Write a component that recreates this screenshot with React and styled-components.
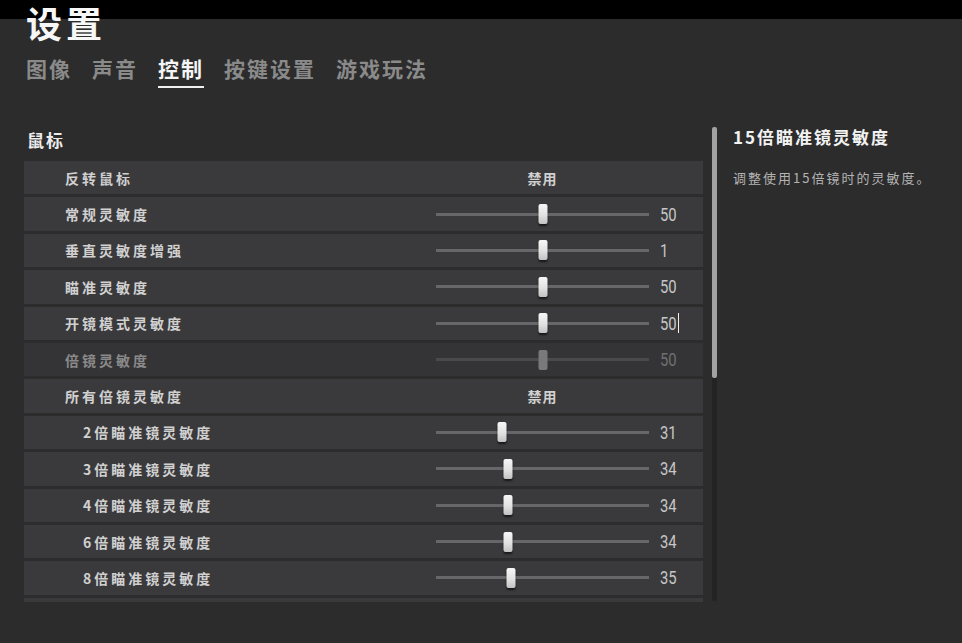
import React from 'react';
import styled, { createGlobalStyle } from 'styled-components';

const GlobalStyle = createGlobalStyle`
  html, body {
    margin: 0;
    padding: 0;
    background: #2c2c2c;
  }
  body {
    width: 962px;
    height: 643px;
    overflow: hidden;
    font-family: "Noto Sans CJK SC", "Noto Sans", sans-serif;
  }
`;

const rows = [
  { label: '反转鼠标', toggle: '禁用' },
  { label: '常规灵敏度', value: 50, pos: 50 },
  { label: '垂直灵敏度增强', value: 1, pos: 50 },
  { label: '瞄准灵敏度', value: 50, pos: 50 },
  { label: '开镜模式灵敏度', value: 50, pos: 50, caret: true },
  { label: '倍镜灵敏度', value: 50, pos: 50, disabled: true },
  { label: '所有倍镜灵敏度', toggle: '禁用' },
  { label: '2倍瞄准镜灵敏度', value: 31, pos: 31, sub: true },
  { label: '3倍瞄准镜灵敏度', value: 34, pos: 34, sub: true },
  { label: '4倍瞄准镜灵敏度', value: 34, pos: 34, sub: true },
  { label: '6倍瞄准镜灵敏度', value: 34, pos: 34, sub: true },
  { label: '8倍瞄准镜灵敏度', value: 35, pos: 35, sub: true },
  { label: '15倍瞄准镜灵敏度', value: 35, pos: 35, sub: true },
];

const tabs = ['图像', '声音', '控制', '按键设置', '游戏玩法'];

const Page = styled.div`
  width: 962px;
  height: 643px;
  background: #2c2c2c;
`;

const TopBar = styled.div`
  height: 19px;
  background: #000;
`;

const Header = styled.header`
  padding-left: 26px;
`;

const Title = styled.h1`
  margin: -15px 0 0;
  font-size: 36px;
  line-height: 1;
  font-weight: 700;
  letter-spacing: 4px;
  color: #f7f7f7;
  position: relative;
`;

const Tabs = styled.nav`
  display: flex;
  gap: 20px;
  margin-top: 18px;
`;

const Tab = styled.div`
  font-size: 21px;
  line-height: 1;
  font-weight: 700;
  letter-spacing: 2px;
  padding-bottom: 7px;
  color: ${(p) => (p.$active ? '#f5f5f5' : '#8a8a8a')};
  border-bottom: 2px solid ${(p) => (p.$active ? '#f0f0f0' : 'transparent')};
`;

const Main = styled.main`
  display: flex;
  align-items: flex-start;
  padding-left: 24px;
  margin-top: 39px;
`;

const LeftCol = styled.section`
  width: 679px;
`;

const SectionTitle = styled.h2`
  margin: 0;
  padding: 4px 0 13px 3px;
  font-size: 17px;
  line-height: 1;
  font-weight: 700;
  letter-spacing: 2px;
  color: #ececec;
`;

const List = styled.div`
  height: 441px;
  overflow: hidden;
  display: flex;
  flex-direction: column;
  gap: 3px;
`;

const Row = styled.div`
  flex: none;
  display: grid;
  grid-template-columns: 412px 213px 1fr;
  align-items: center;
  height: 33.4px;
  background: ${(p) => (p.$disabled ? '#343436' : '#3a3a3c')};
`;

const Label = styled.div`
  padding-left: ${(p) => (p.$sub ? '59px' : '41px')};
  font-size: 14px;
  line-height: 1;
  font-weight: 700;
  letter-spacing: 3px;
  color: ${(p) => (p.$disabled ? '#8a8a8a' : '#d0d0d0')};
  white-space: nowrap;
`;

const ToggleText = styled.div`
  text-align: center;
  font-size: 14px;
  line-height: 1;
  font-weight: 700;
  letter-spacing: 1px;
  color: #d0d0d0;
`;

const Track = styled.div`
  position: relative;
  height: 3px;
  background: ${(p) => (p.$disabled ? '#4a4a4c' : '#676769')};
`;

const Thumb = styled.div`
  position: absolute;
  top: 50%;
  width: 9px;
  height: 20px;
  border-radius: 2px;
  transform: translate(-50%, -50%);
  background: ${(p) =>
    p.$disabled
      ? '#79797a'
      : 'linear-gradient(180deg, #f6f6f6 0%, #e2e2e2 55%, #c2c2c2 100%)'};
  box-shadow: ${(p) => (p.$disabled ? 'none' : '0 2px 2px rgba(0, 0, 0, 0.6)')};
`;

const Value = styled.div`
  display: flex;
  align-items: center;
  padding-left: 11px;
  color: ${(p) => (p.$disabled ? '#707070' : '#c6c6c6')};
`;

const Digits = styled.span`
  display: inline-block;
  font-family: Roboto, "Liberation Sans", sans-serif;
  font-size: 19px;
  line-height: 1;
  transform: scaleX(0.78);
  transform-origin: left center;
  margin-right: ${(p) => (p.$chars * -2.3)}px;
`;

const Caret = styled.span`
  display: inline-block;
  width: 1px;
  height: 20px;
  margin-left: 1px;
  background: #f0f0f0;
`;

const ScrollTrack = styled.div`
  width: 5px;
  height: 474px;
  margin-left: 9px;
  background: #232323;
  border-radius: 2px;
`;

const ScrollThumb = styled.div`
  height: 251px;
  background: #a2a2a2;
  border-radius: 2px;
`;

const Info = styled.aside`
  margin-left: 16px;
  padding-top: 1px;
`;

const InfoTitle = styled.h3`
  margin: 0;
  font-size: 17px;
  line-height: 1;
  font-weight: 700;
  letter-spacing: 2px;
  color: #f2f2f2;
`;

const InfoText = styled.p`
  margin: 26px 0 0;
  font-size: 13px;
  line-height: 1;
  letter-spacing: 2px;
  color: #b4b4b4;
`;

function SettingRow({ row }) {
  const text = String(row.value);
  return (
    <Row $disabled={row.disabled}>
      <Label $sub={row.sub} $disabled={row.disabled}>{row.label}</Label>
      {row.toggle ? (
        <ToggleText>{row.toggle}</ToggleText>
      ) : (
        <>
          <Track $disabled={row.disabled}>
            <Thumb $disabled={row.disabled} style={{ left: `${row.pos}%` }} />
          </Track>
          <Value $disabled={row.disabled}>
            <Digits $chars={text.length}>{text}</Digits>
            {row.caret && <Caret />}
          </Value>
        </>
      )}
    </Row>
  );
}

export default function App() {
  return (
    <Page>
      <GlobalStyle />
      <TopBar />
      <Header>
        <Title>设置</Title>
        <Tabs>
          {tabs.map((t) => (
            <Tab key={t} $active={t === '控制'}>{t}</Tab>
          ))}
        </Tabs>
      </Header>
      <Main>
        <LeftCol>
          <SectionTitle>鼠标</SectionTitle>
          <List>
            {rows.map((r) => (
              <SettingRow key={r.label} row={r} />
            ))}
          </List>
        </LeftCol>
        <ScrollTrack>
          <ScrollThumb />
        </ScrollTrack>
        <Info>
          <InfoTitle>15倍瞄准镜灵敏度</InfoTitle>
          <InfoText>调整使用15倍镜时的灵敏度。</InfoText>
        </Info>
      </Main>
    </Page>
  );
}
